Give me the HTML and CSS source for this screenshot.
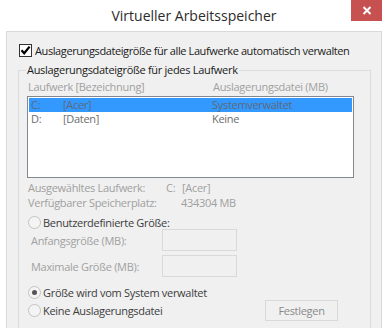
FILE: index.html
```html
<!DOCTYPE html>
<html lang="de">
<head>
<meta charset="utf-8">
<title>Virtueller Arbeitsspeicher</title>
<link rel="stylesheet" href="styles.css">
</head>
<body>
<div class="window">
  <div class="titlebar">
    <div></div>
    <div class="title">Virtueller Arbeitsspeicher</div>
    <div class="close"><svg width="10" height="9" viewBox="0 0 10 9"><path d="M1.5 1 L8.5 8 M8.5 1 L1.5 8" stroke="#fff" stroke-width="2"/></svg></div>
  </div>
  <div class="client">
    <div class="check-row">
      <span class="checkbox"><svg width="11" height="11" viewBox="0 0 11 11"><path d="M1.5 5.3 L4.2 8.3 L9.6 1.6" fill="none" stroke="#000" stroke-width="2.2"/></svg></span>
      <span class="check-label">Auslagerungsdateigröße für alle Laufwerke automatisch verwalten</span>
    </div>
    <fieldset class="group">
      <legend>Auslagerungsdateigröße für jedes Laufwerk</legend>
      <div class="list-head"><span class="col-drive">Laufwerk [Bezeichnung]</span><span>Auslagerungsdatei (MB)</span></div>
      <div class="listbox">
        <div class="row sel"><span class="drv">C:</span><span class="lbl">[Acer]</span><span>Systemverwaltet</span></div>
        <div class="row"><span class="drv">D:</span><span class="lbl">[Daten]</span><span>Keine</span></div>
      </div>
      <div class="info">
        <span>Ausgewähltes Laufwerk:</span><span><span class="drv-short">C:</span>[Acer]</span>
        <span>Verfügbarer Speicherplatz:</span><span class="free">434304 MB</span>
      </div>
      <div class="radio-row first"><span class="radio"></span><span>Benutzerdefinierte Größe:</span></div>
      <div class="size-row"><span class="size-label">Anfangsgröße (MB):</span><span class="input"></span></div>
      <div class="size-row second"><span class="size-label">Maximale Größe (MB):</span><span class="input"></span></div>
      <div class="radio-row system"><span class="radio checked"></span><span>Größe wird vom System verwaltet</span></div>
      <div class="bottom-row">
        <div class="radio-inline"><span class="radio"></span><span>Keine Auslagerungsdatei</span></div>
        <span class="button">Festlegen</span>
      </div>
    </fieldset>
  </div>
</div>
</body>
</html>
```

FILE: styles.css
```css
html, body {
  margin: 0;
  padding: 0;
  background: #ffffff;
}
body {
  font-family: "Open Sans", "Noto Sans", sans-serif;
  font-size: 11px;
  letter-spacing: -0.3px;
  color: #1e1e1e;
  overflow: hidden;
}
.window {
  width: 388px;
  height: 328px;
  display: flex;
  flex-direction: column;
  background: #ffffff;
  overflow: hidden;
}
.titlebar {
  display: grid;
  grid-template-columns: 1fr auto 1fr;
  height: 31px;
  flex: none;
}
.title {
  font-size: 14px;
  letter-spacing: 0;
  line-height: 31px;
  color: #2b2b2b;
}
.close {
  justify-self: end;
  margin-right: 6px;
  width: 31px;
  height: 21px;
  background: #c75050;
  display: flex;
  align-items: center;
  justify-content: center;
}
.client {
  flex: 1;
  margin: 0 6px;
  border: 1px solid #d9d9d9;
  border-bottom: none;
  background: #f0f0f0;
  padding-top: 10px;
}
.check-row {
  display: flex;
  align-items: center;
  height: 16px;
  padding-left: 12px;
  gap: 3px;
  color: #1a1a1a;
}
.check-label {
  letter-spacing: -0.4px;
}
.checkbox {
  width: 11px;
  height: 11px;
  border: 1px solid #333;
  background: #fff;
  display: flex;
}
.group {
  margin: 4px 10px 0 11px;
  border: 1px solid #dcdcdc;
  padding: 0 16px 0 8px;
  min-width: 0;
}
.group legend {
  line-height: 16px;
  padding: 0 1px;
  margin-left: -1px;
  color: #1a1a1a;
}
.list-head {
  display: flex;
  line-height: 14px;
  padding: 2px 0 0 1px;
  color: #a0a0a0;
}
.col-drive {
  width: 185px;
}
.listbox {
  margin-top: 2px;
  border: 1px solid #828790;
  background: #fff;
  padding: 1px;
  height: 78px;
}
.row {
  display: flex;
  height: 14px;
  line-height: 14px;
  padding-left: 2px;
  color: #6d6d6d;
}
.row.sel {
  background: #3399ff;
  color: #5e6a78;
}
.drv {
  width: 32px;
}
.lbl {
  width: 149px;
}
.info {
  display: grid;
  grid-template-columns: 138px auto;
  margin-top: 2px;
  padding-left: 1px;
  line-height: 15px;
  color: #a0a0a0;
}
.drv-short {
  display: inline-block;
  width: 16px;
}
.free {
  padding-left: 15px;
}
.radio-row {
  display: flex;
  align-items: center;
  height: 14px;
  gap: 2px;
  padding-left: 1px;
  color: #3c3c3c;
}
.radio-row.first {
  margin-top: 5px;
}
.radio-row.system {
  margin-top: 8px;
}
.radio {
  width: 11px;
  height: 11px;
  border: 1px solid #c4c4c4;
  border-radius: 50%;
  background: #f4f4f4;
  display: flex;
  align-items: center;
  justify-content: center;
}
.radio.checked::after {
  content: "";
  width: 5px;
  height: 5px;
  border-radius: 50%;
  background: #555;
}
.size-row {
  display: flex;
  align-items: center;
  height: 22px;
  padding-left: 4px;
  color: #a0a0a0;
}
.size-row.second {
  margin-top: 4px;
}
.size-label {
  width: 131px;
}
.input {
  width: 73px;
  height: 20px;
  border: 1px solid #d9d9d9;
  background: #f0f0f0;
}
.bottom-row {
  display: flex;
  align-items: center;
  height: 21px;
  margin-top: 1px;
  padding-left: 1px;
  padding-bottom: 20px;
}
.radio-inline {
  display: flex;
  align-items: center;
  gap: 2px;
  color: #3c3c3c;
}
.button {
  margin-left: auto;
  margin-right: 16px;
  width: 71px;
  height: 19px;
  border: 1px solid #d9d9d9;
  background: #f0f0f0;
  color: #8a8a8a;
  display: flex;
  align-items: center;
  justify-content: center;
}
```
